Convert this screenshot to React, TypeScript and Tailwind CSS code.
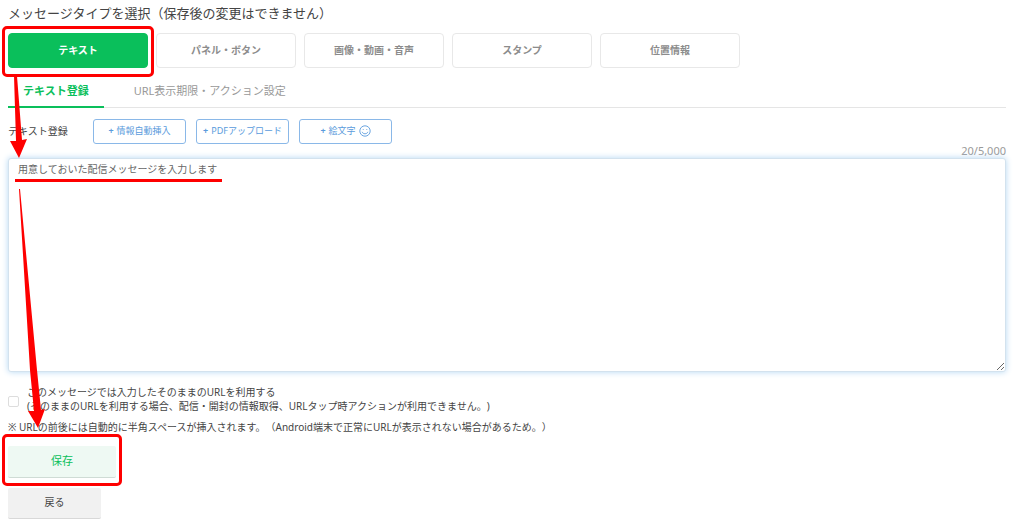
import clsx from "clsx";
import type { ReactNode } from "react";

const messageTypes = ["テキスト", "パネル・ボタン", "画像・動画・音声", "スタンプ", "位置情報"];

const SmileIcon = () => (
  <svg width="12" height="12" viewBox="0 0 12 12" fill="none" stroke="currentColor" strokeWidth="0.9">
    <circle cx="6" cy="6" r="5.2" />
    <path d="M3.2 7.2C4 9.4 8 9.4 8.8 7.2" strokeLinecap="round" />
    <circle cx="4.2" cy="4.6" r="0.5" fill="currentColor" stroke="none" />
    <circle cx="7.8" cy="4.6" r="0.5" fill="currentColor" stroke="none" />
  </svg>
);

const InsertButton = ({ children }: { children: ReactNode }) => (
  <button
    type="button"
    className="flex h-[25px] w-[93px] items-center justify-center gap-[3px] rounded-[3px] border border-[#8ab8e8] bg-white pb-[2px] text-[9px] whitespace-nowrap text-[#5a9bdc]"
  >
    {children}
  </button>
);

// Red frame around a control the reader has to click
const Highlight = ({ className }: { className: string }) => (
  <span className={clsx("pointer-events-none absolute -inset-x-[6px] rounded-[5px] border-3 border-[#fe0000]", className)} />
);

const App = () => {
  return (
    <main className="relative bg-white pt-[3px] pr-[18px] pb-3 pl-2 font-['Noto_Sans','Noto_Sans_CJK_JP',sans-serif] text-[10px] leading-[14px] text-[#444] [text-spacing-trim:space-all]">
      <h1 className="text-[13px] leading-5">メッセージタイプを選択（保存後の変更はできません）</h1>

      <div className="mt-[10px] flex gap-2">
        {messageTypes.map((type, index) => (
          <div key={type} className="relative">
            <button
              type="button"
              className={clsx(
                "block h-[35px] w-[140px] rounded-[4px] border pb-[2px] font-bold",
                index === 0
                  ? "border-[#0abf5b] bg-[#0abf5b] text-white"
                  : "border-[#e8e8e8] bg-white text-[#8c8c8c]"
              )}
            >
              {type}
            </button>
            {index === 0 && <Highlight className="-top-[7px] -bottom-[9px]" />}
          </div>
        ))}
      </div>

      <nav className="mt-[6px] flex gap-[15px] border-b border-[#e5e5e5] text-[11px]">
        <a href="#text" className="-mb-px flex h-[34px] items-center border-b-2 border-[#0abf5b] px-[15px] pt-[2px] font-bold text-[#0abf5b]">
          テキスト登録
        </a>
        <a href="#url" className="flex h-[33px] items-center px-[15px] pt-px text-[#999]">
          URL表示期限・アクション設定
        </a>
      </nav>

      <div className="mt-[11px] flex items-center gap-[10px]">
        <label htmlFor="message" className="w-[75px] pb-[2px]">テキスト登録</label>
        <InsertButton><b>+</b>情報自動挿入</InsertButton>
        <InsertButton><b>+</b>PDFアップロード</InsertButton>
        <InsertButton><b>+</b>絵文字<SmileIcon /></InsertButton>
      </div>

      <div className="text-right text-[11px] text-[#999]">20/5,000</div>

      <div className="relative">
        <textarea
          id="message"
          defaultValue="用意しておいた配信メッセージを入力します"
          className="block h-[214px] w-full resize rounded-[3px] border border-[#d3e2ee] bg-white px-[9px] py-[3px] text-[#666] shadow-[0_0_6px_#b5d8f3] outline-none"
        />
        <span className="pointer-events-none absolute top-[21px] left-[7px] h-[3px] w-[207px] bg-[#fe0000]" />
      </div>

      <div className="mt-[13px] flex items-center gap-2">
        <input
          id="raw-url"
          type="checkbox"
          className="mt-1 size-[11px] appearance-none rounded-[2px] border border-[#ddd] bg-white checked:bg-[#0abf5b]"
        />
        <label htmlFor="raw-url">
          このメッセージでは入力したそのままのURLを利用する
          <br />
          (そのままのURLを利用する場合、配信・開封の情報取得、URLタップ時アクションが利用できません。)
        </label>
      </div>

      <p className="mt-[7px]">
        ※ URLの前後には自動的に半角スペースが挿入されます。（Android端末で正常にURLが表示されない場合があるため。）
      </p>

      <div className="mt-3 flex flex-col items-start gap-[10px]">
        <div className="relative">
          <button type="submit" className="block h-8 w-[108px] rounded-[2px] border-b border-[#cfdcd5] bg-[#eef9f3] pb-[2px] text-[11px] text-[#0abf5b]">
            保存
          </button>
          <Highlight className="-top-3 -bottom-2" />
        </div>
        <button type="button" className="block h-[31px] w-[93px] rounded-[2px] border-b border-[#d8d8d8] bg-[#f1f1f1] pb-[2px]">
          戻る
        </button>
      </div>

      {/* Arrows that lead from one step to the next */}
      <svg className="pointer-events-none absolute top-0 left-0" width="60" height="440" fill="#fe0000">
        <path d="M14 76H17L22 140L27 139L19 158L10 141L16 141Z" />
        <path d="M19 189H20L37 370L41 410L45 409L38 428L28 411L34 411L30 370Z" />
      </svg>
    </main>
  );
};

export default App;
